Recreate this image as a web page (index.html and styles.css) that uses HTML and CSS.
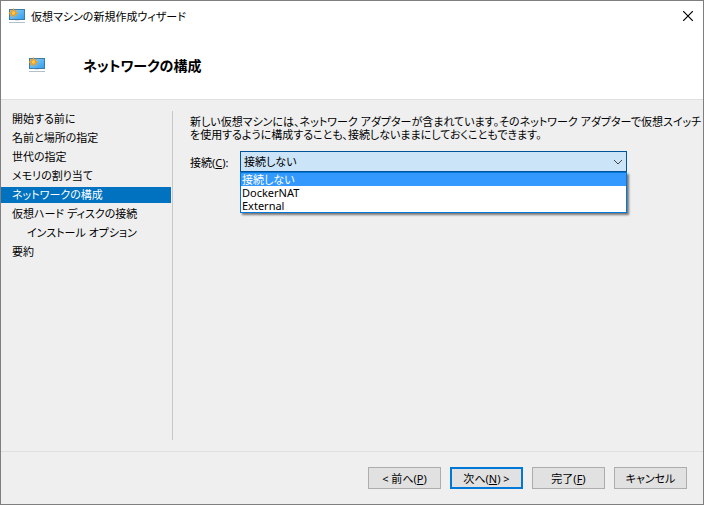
FILE: index.html
```html
<!DOCTYPE html>
<html lang="ja">
<head>
    <meta charset="UTF-8">
    <meta name="viewport" content="width=device-width, initial-scale=1.0">
    <title>仮想マシンの新規作成ウィザード</title>
    <link rel="stylesheet" href="styles.css">
</head>
<body>

    <svg class="defs" aria-hidden="true">
        <defs>
            <linearGradient id="screen" x1="0" y1="0" x2="1" y2="1">
                <stop offset="0" stop-color="#8fd3f8"/>
                <stop offset="1" stop-color="#2f9df0"/>
            </linearGradient>
            <symbol id="vm" viewBox="0 0 18 16">
                <rect x="1.5" y="1.5" width="15" height="10" fill="url(#screen)" stroke="#3c7ba8"/>
                <path d="M5.5 .5v9M1 5h9M2.5 2l6 6M8.5 2l-6 6" stroke="#eda02a" stroke-width="1.3"/>
                <circle cx="5.5" cy="5" r="2.2" fill="#ffc94a" stroke="#e8941a" stroke-width=".7"/>
                <path d="M7 12.5h4" stroke="#dfe5ea"/>
                <path d="M1 14.5h16" stroke="#b4c0c9"/>
            </symbol>
        </defs>
    </svg>

    <div class="wizard">
        <header class="title-bar">
            <svg class="icon"><use href="#vm"/></svg>
            <span class="title">仮想マシンの新規作成ウィザード</span>
            <button class="close-btn" aria-label="閉じる">
                <svg width="10" height="10" viewBox="0 0 10 10"><path d="M0 0l10 10M10 0L0 10" stroke="#000" stroke-width="1.2"/></svg>
            </button>
        </header>

        <div class="page-header">
            <svg class="icon"><use href="#vm"/></svg>
            <h1>ネットワークの構成</h1>
        </div>

        <div class="main">
            <nav class="steps">
                <a class="step" href="#">開始する前に</a>
                <a class="step" href="#">名前と場所の指定</a>
                <a class="step" href="#">世代の指定</a>
                <a class="step" href="#">メモリの割り当て</a>
                <a class="step current" href="#" aria-current="step">ネットワークの構成</a>
                <a class="step" href="#">仮想ハード ディスクの接続</a>
                <a class="step sub" href="#">インストール オプション</a>
                <a class="step" href="#">要約</a>
            </nav>

            <div class="content">
                <p>新しい仮想マシンには、ネットワーク アダプターが含まれています。そのネットワーク アダプターで仮想スイッチ<br>を使用するように構成することも、接続しないままにしておくこともできます。</p>

                <div class="field">
                    <label for="connection">接続(<u>C</u>):</label>
                    <div class="combo">
                        <select id="connection">
                            <option selected>接続しない</option>
                            <option>DockerNAT</option>
                            <option>External</option>
                        </select>
                        <svg class="arrow" width="10" height="6" viewBox="0 0 10 6"><path d="M1 1l4 4 4-4" fill="none" stroke="#444"/></svg>
                        <ul class="options" role="listbox" aria-label="接続">
                            <li class="selected" role="option" aria-selected="true">接続しない</li>
                            <li role="option">DockerNAT</li>
                            <li role="option">External</li>
                        </ul>
                    </div>
                </div>
            </div>
        </div>

        <footer class="buttons">
            <button class="btn">&lt; 前へ(<u>P</u>)</button>
            <button class="btn default">次へ(<u>N</u>) &gt;</button>
            <button class="btn">完了(<u>F</u>)</button>
            <button class="btn">キャンセル</button>
        </footer>
    </div>

</body>
</html>
```

FILE: styles.css
```css
* {
    box-sizing: border-box;
}

body {
    margin: 0;
    font-family: "Noto Sans", "Noto Sans CJK JP", sans-serif;
    font-size: 11px;
    font-feature-settings: "palt";
    color: #000;
}

.defs {
    position: absolute;
    width: 0;
    height: 0;
}

.wizard {
    display: flex;
    flex-direction: column;
    min-height: 100vh;
    background-color: #efefef;
    border: 1px solid #7f7f7f;
}

.icon {
    width: 18px;
    height: 16px;
    flex: none;
}

/* Title bar */
.title-bar {
    display: flex;
    align-items: center;
    height: 30px;
    padding: 0 10px 0 7px;
    background-color: #fff;
}

.title {
    flex: 1;
    margin-left: 5px;
}

.close-btn {
    display: flex;
    padding: 0;
    border: none;
    background: none;
}

/* Page heading */
.page-header {
    display: flex;
    align-items: center;
    height: 69px;
    padding: 0 27px;
    background-color: #fff;
    border-bottom: 1px solid #dfdfdf;
}

h1 {
    margin: 0 0 0 37px;
    font-size: 14px;
    font-weight: bold;
}

.main {
    display: flex;
    flex: 1;
    padding: 11px 0;
}

/* Step list */
.steps {
    display: flex;
    flex: none;
    flex-direction: column;
    gap: 3px;
    width: 172px;
    padding-right: 1px;
    border-right: 1px solid #c8c8c8;
}

.step {
    height: 16px;
    padding-left: 11px;
    line-height: 16px;
    color: #000;
    text-decoration: none;
    white-space: nowrap;
}

.step.sub {
    padding-left: 26px;
}

.step.current {
    background-color: #0072c0;
    color: #fff;
}

/* Settings */
.content {
    flex: 1;
    min-width: 0;
    padding: 4px 16px 0 17px;
}

p {
    margin: 0;
    line-height: 13px;
    white-space: nowrap;
}

.field {
    display: flex;
    align-items: center;
    margin-top: 10px;
}

label {
    width: 50px;
}

.combo {
    position: relative;
    flex: 1;
    max-width: 387px;
}

select {
    display: block;
    width: 100%;
    height: 21px;
    padding: 0 3px;
    border: 1px solid #00549a;
    border-radius: 0;
    background-color: #cce4f7;
    color: #000;
    font: inherit;
    font-feature-settings: inherit;
    appearance: none;
}

.arrow {
    position: absolute;
    top: 8px;
    right: 4px;
    pointer-events: none;
}

.options {
    position: absolute;
    top: 100%;
    left: 0;
    right: 0;
    margin: 0;
    padding: 0;
    list-style: none;
    border: 1px solid #0078d7;
    background-color: #fff;
    box-shadow: 2px 2px 2px rgba(0, 0, 0, 0.5);
}

.options li {
    height: 13px;
    padding-left: 1px;
    line-height: 13px;
}

.options .selected {
    background-color: #3399ff;
    color: #fff;
}

/* Buttons */
.buttons {
    display: flex;
    justify-content: flex-end;
    gap: 9px;
    padding: 15px 16px;
    border-top: 1px solid #dfdfdf;
}

.btn {
    width: 73px;
    height: 22px;
    padding: 0;
    border: 1px solid #adadad;
    background-color: #e1e1e1;
    color: #000;
    font: inherit;
    font-feature-settings: inherit;
    white-space: nowrap;
}

.btn.default {
    border: 2px solid #0078d7;
}
```
